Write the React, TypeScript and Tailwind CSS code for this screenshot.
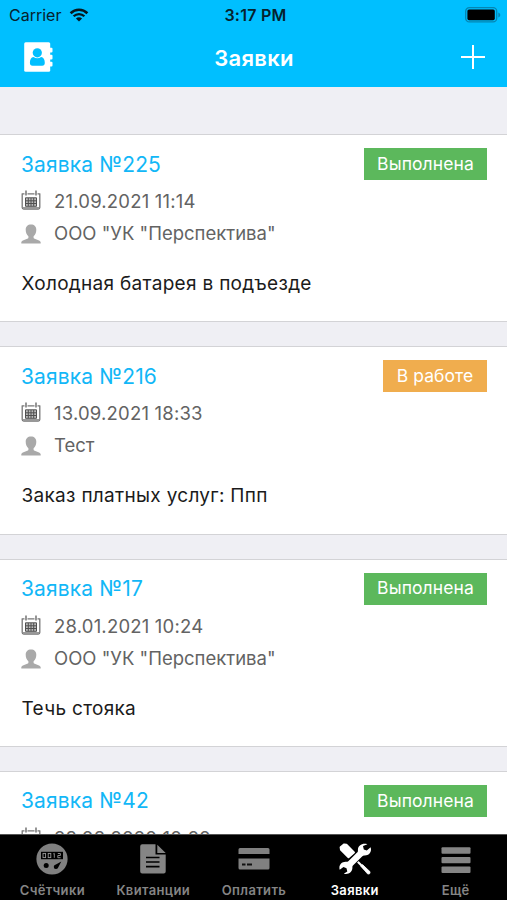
import type { ReactNode } from 'react';

interface Ticket {
  title: string;
  status: 'done' | 'progress';
  date: string;
  company?: string;
  text?: string;
}

const tickets: Ticket[] = [
  { title: 'Заявка №225', status: 'done', date: '21.09.2021 11:14', company: 'ООО "УК "Перспектива"', text: 'Холодная батарея в подъезде' },
  { title: 'Заявка №216', status: 'progress', date: '13.09.2021 18:33', company: 'Тест', text: 'Заказ платных услуг: Ппп' },
  { title: 'Заявка №17', status: 'done', date: '28.01.2021 10:24', company: 'ООО "УК "Перспектива"', text: 'Течь стояка' },
  { title: 'Заявка №42', status: 'done', date: '28.08.2020 10:20' },
];

function WifiIcon() {
  return (
    <svg width="20" height="14" viewBox="0 0 20 14" fill="none" stroke="#06171f">
      <path d="M1.6 5.2a12 12 0 0 1 16.8 0" strokeWidth="2.6" />
      <path d="M4.6 8.3a7.7 7.7 0 0 1 10.8 0" strokeWidth="2.3" />
      <path d="M10 13.6 6.9 10.6a4.5 4.5 0 0 1 6.2 0z" fill="#06171f" stroke="none" />
    </svg>
  );
}

function BatteryIcon() {
  return (
    <svg width="36" height="16" viewBox="0 0 36 16">
      <rect x="0.7" y="0.7" width="31" height="14.2" rx="3.6" fill="none" stroke="#0586b3" strokeWidth="1.3" />
      <rect x="2.4" y="2.4" width="27.4" height="10.8" rx="1.6" fill="#000" />
      <path d="M33.3 5.4c2.6 1 2.6 4 0 5z" fill="#0586b3" />
    </svg>
  );
}

function ContactsIcon() {
  return (
    <svg className="mb-[2px]" width="29" height="30" viewBox="0 0 29 30" fill="#fff">
      <rect x="0.2" y="0.2" width="26" height="29.500" rx="1.500" />
      <rect x="25" y="5.800" width="3.500" height="4.600" rx="1" />
      <rect x="25" y="12.800" width="3.500" height="4.600" rx="1" />
      <rect x="25" y="19.800" width="3.500" height="4.600" rx="1" />
      <circle cx="13.300" cy="10.800" r="4.600" fill="#00bfff" />
      <path d="M9.500 14.900q3.800 2.900 7.600 0c2.300.2 3.700 2.600 3.700 5.800 0 2-.9 3-2.600 3H8.500c-1.700 0-2.600-1-2.600-3 0-3.200 1.300-5.600 3.600-5.800z" fill="#00bfff" />
    </svg>
  );
}

function CalendarIcon() {
  return (
    <svg className="-ml-[0.5px] mb-[2px]" width="20" height="20" viewBox="0 0 20 20" fill="none">
      <path d="M.8 3.800h2.700M6.500 3.800h7M16.500 3.800h2.700M1.200 3.500v14q0 1.500 1.500 1.500h14.600q1.500 0 1.500-1.500v-14" stroke="#777" strokeWidth="1.3" />
      <path d="M5 .6v4.800M15 .6v4.800" stroke="#6a6a6a" strokeWidth="1.4" />
      <path d="M2 17.900h16" stroke="#999" strokeWidth="1.8" />
      <path d="M4.500 7.800h11v8.500h-11z" fill="#bbb" />
      <path d="M4.500 7.800h11v8.500h-11zM4.500 10.800h11M4.500 13.500h11M7.300 8v8.200M10 8v8.200M12.700 8v8.200" stroke="#505050" strokeWidth="1" />
    </svg>
  );
}

function PersonIcon() {
  return (
    <svg className="-ml-[0.5px]" width="20" height="20" viewBox="0 0 20 20" fill="#a9a9a9">
      <path d="M10 .5c3.300 0 5.300 2 5.300 5.200 0 2.800-1 5-2.700 6.600v1.800c.4 1.200 6.900 1.800 7.100 4.200v1.200H.3v-1.200c.2-2.400 6.700-3 7.100-4.200v-1.800C5.700 10.700 4.700 8.500 4.700 5.700c0-3.200 2-5.200 5.300-5.200z" />
    </svg>
  );
}

function MeterIcon() {
  return (
    <svg width="32" height="32" viewBox="0 0 32 32">
      <circle cx="16" cy="16" r="15.600" fill="#808080" />
      <rect x="5" y="8.800" width="22" height="7.400" fill="#000" />
      <g stroke="#999" strokeWidth="0.900" fill="none">
        <rect x="7" y="10.400" width="2.600" height="4.200" />
        <rect x="12.200" y="10.400" width="2.600" height="4.200" />
        <path d="M17.300 10.900l1-.5v4.400M21.800 10.500h2.600v2h-2.600v2.200h2.800" />
      </g>
      <circle cx="10.200" cy="22.400" r="2.500" fill="#000" />
      <path d="M25.300 18.600l-3 5.600a2.300 2.300 0 1 1-2.400-2.800z" fill="#000" />
    </svg>
  );
}

function ReceiptIcon() {
  return (
    <svg width="32" height="32" viewBox="0 0 32 32">
      <path d="M5.200 1.300h13.300v10.200h10.200v16.900q0 2-2 2H5.200q-2 0-2-2V3.300q0-2 2-2zM20.300 1.700l8.400 8.300h-8.400z" fill="#858585" />
      <path d="M9 14.500h13.500M9 19h13.500M9 23.700h13.500" stroke="#000" strokeWidth="1.700" />
    </svg>
  );
}

function CardIcon() {
  return (
    <svg width="32" height="32" viewBox="0 0 32 32">
      <path d="M2 5h28q1.500 0 1.500 1.500v4.600H.5V6.500Q.5 5 2 5zM.500 15.500h31v9.400q0 1.500-1.500 1.500H2q-1.500 0-1.500-1.500z" fill="#808080" />
      <path d="M4 21.500h3.500M9 21.500h5" stroke="#111" strokeWidth="1.800" />
    </svg>
  );
}

function ToolsIcon() {
  return (
    <svg width="32" height="32" viewBox="0 0 32 32" strokeLinejoin="round">
      <path d="M1.600 4.200 5.200 1.400 7.400 1.800 15 9.400 9.500 14.200 2 6.800z" fill="#fff" stroke="#fff" strokeWidth="2" />
      <path d="M18 18l8 8" stroke="#fff" strokeWidth="2.200" />
      <path d="M23.500 21.600l7.600 7.200-.4 1.900-1.900.4-6.900-7.800z" fill="#fff" stroke="#fff" strokeWidth="0.800" />
      <path
        d="M28.400 1.300C23.900-.3 18.900 2.200 18.900 7c.1 1.300 0 1.800-.8 2.600L9.300 18.200c-.8.700-1.600.700-2.700.6-4.600.1-7.100 4.100-5.900 7.900l3.800-2.700 3 1.200.8 3.300-3.500 2.200c4.600 1.300 8.800-1.600 8.600-6.200-.1-1 .1-1.600.8-2.300l8.900-8.800c.8-.8 1.500-.9 2.700-.8 4.800 0 7.200-4.100 5.800-8.400l-3.800 3.200-3-.9-.8-3.500z"
        fill="#fff"
        stroke="#000"
        strokeWidth="1.800"
        paintOrder="stroke"
      />
    </svg>
  );
}

function MenuIcon() {
  return (
    <svg width="32" height="32" viewBox="0 0 32 32" fill="#858585">
      <rect x="1.500" y="4.300" width="29" height="6.500" rx="1" />
      <rect x="1.500" y="14" width="29" height="6.200" rx="1" />
      <rect x="1.500" y="23.500" width="29" height="6.500" rx="1" />
    </svg>
  );
}

function TicketCard({ ticket }: { ticket: Ticket }) {
  return (
    <article className="h-[188.300px] shrink-0 border-y-[1.500px] border-[#d3d3d6] bg-white pl-[21.500px] pr-5">
      <div className="flex items-start justify-between pt-[13px]">
        <h2 className="-ml-[0.500px] pt-[2.500px] text-[21px] leading-7 tracking-[0.120px] text-[#12b7f7]">{ticket.title}</h2>
        {ticket.status === 'done' ? (
          <span className="flex h-8 w-[123px] items-center justify-center bg-[#5cb85c] text-[17.500px] tracking-[0.100px] text-white">Выполнена</span>
        ) : (
          <span className="flex h-8 w-[104px] items-center justify-center bg-[#f0ad4e] text-[17.500px] tracking-[0.050px] text-white">В работе</span>
        )}
      </div>
      <div className="mt-[5px] flex h-8 items-center gap-[13px] text-[18.500px] text-[#636363]">
        <CalendarIcon />
        <span className="pt-[2px] tracking-[0.200px]">{ticket.date}</span>
      </div>
      {ticket.company && (
        <div className="mt-px flex h-8 items-center gap-[13px] text-[18.500px] text-[#636363]">
          <PersonIcon />
          <span>{ticket.company}</span>
        </div>
      )}
      {ticket.text && <p className="mt-5 text-[19px] leading-7 tracking-[0.300px] text-[#1b1b1b]">{ticket.text}</p>}
    </article>
  );
}

function Tab({ label, active, children }: { label: string; active?: boolean; children: ReactNode }) {
  return (
    <button className={`flex flex-1 flex-col items-center pt-2 ${active ? 'text-white' : 'text-[#858585]'}`}>
      {children}
      <span className="mt-[7px] whitespace-nowrap text-[13px] font-semibold leading-4 tracking-[0.350px]">{label}</span>
    </button>
  );
}

export default function App() {
  return (
    <div className="flex h-[900px] w-[507px] flex-col overflow-hidden bg-[#efeff4] font-['Inter','Liberation_Sans',sans-serif]">
      <header className="h-[87px] shrink-0 bg-[#00bfff]">
        <div className="grid h-[29px] grid-cols-3 items-center pl-[9px] pr-[6px] text-[16px] text-[#06222e]">
          <div className="flex items-center gap-2">
            <span>Carrier</span>
            <WifiIcon />
          </div>
          <span className="pl-px text-center font-semibold tracking-[0.250px]">3:17 PM</span>
          <div className="flex justify-end">
            <BatteryIcon />
          </div>
        </div>
        <div className="grid h-[58px] grid-cols-3 items-center pl-[23px] pr-[22px] text-white">
          <div className="pl-px">
            <ContactsIcon />
          </div>
          <h1 className="text-center text-[22px] font-semibold tracking-[0.300px]">Заявки</h1>
          <svg className="mb-[3px] justify-self-end" width="24" height="24" viewBox="0 0 24 24" stroke="currentColor" strokeWidth="2">
            <path d="M12 0v24M0 12h24" />
          </svg>
        </div>
      </header>

      <main className="flex min-h-0 flex-1 flex-col gap-6 overflow-hidden pt-[47px]">
        {tickets.map((ticket) => (
          <TicketCard key={ticket.title} ticket={ticket} />
        ))}
      </main>

      <nav className="flex h-[66px] shrink-0 border-t border-[#555] bg-black pl-[2px] pr-px">
        <Tab label="Счётчики"><MeterIcon /></Tab>
        <Tab label="Квитанции"><ReceiptIcon /></Tab>
        <Tab label="Оплатить"><CardIcon /></Tab>
        <Tab label="Заявки" active><ToolsIcon /></Tab>
        <Tab label="Ещё"><MenuIcon /></Tab>
      </nav>
    </div>
  );
}
